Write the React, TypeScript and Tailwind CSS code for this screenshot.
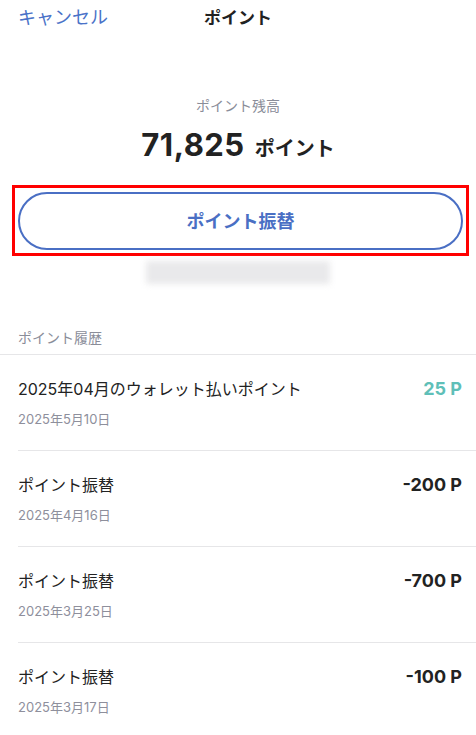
import React from 'react';

interface HistoryItem {
  title: string;
  date: string;
  amount: string;
  positive?: boolean;
}

const history: HistoryItem[] = [
  { title: '2025年04月のウォレット払いポイント', date: '2025年5月10日', amount: '25 P', positive: true },
  { title: 'ポイント振替', date: '2025年4月16日', amount: '-200 P' },
  { title: 'ポイント振替', date: '2025年3月25日', amount: '-700 P' },
  { title: 'ポイント振替', date: '2025年3月17日', amount: '-100 P' },
];

const font = { fontFamily: 'Inter, "Noto Sans CJK JP", sans-serif' };

export default function App() {
  return (
    <div className="w-[476px] h-[735px] bg-white overflow-hidden text-[#222]" style={font}>
      {/* header */}
      <div className="grid grid-cols-[1fr_auto_1fr] items-center h-[36px] px-[18px]">
        <span className="text-[18px] text-[#4a72c8] leading-none">キャンセル</span>
        <span className="text-[17px] font-bold leading-none">ポイント</span>
        <span />
      </div>

      {/* balance */}
      <div className="flex flex-col items-center pt-[60px]">
        <span className="text-[14px] leading-[20px] text-[#8a8d99]">ポイント残高</span>
        <div className="flex items-baseline gap-[10px] mt-[13px] leading-none">
          <span className="text-[31px] font-bold tracking-[0.5px]">71,825</span>
          <span className="text-[20px] font-bold">ポイント</span>
        </div>
      </div>

      {/* transfer button */}
      <div className="ml-[12px] mr-[7px] mt-[25px] border-[3px] border-[#ff0000] pt-[4px] pb-[3px] px-[3px]">
        <button className="w-full h-[58px] rounded-full border-2 border-[#4a6fc4] flex items-center justify-center text-[18px] font-bold text-[#4a6fc4]">
          ポイント振替
        </button>
      </div>

      <div className="flex justify-center mt-[5px]">
        <div className="w-[184px] h-[23px] bg-[#e9e9eb] blur-[3px]" />
      </div>

      {/* history */}
      <div className="mt-[41px] px-[18px] pb-[5px]">
        <span className="text-[14px] leading-[20px] text-[#8a8d99]">ポイント履歴</span>
      </div>
      <div className="border-t border-[#e6e6e8]">
        {history.map((item, i) => (
          <div key={i} className="ml-[18px] border-b border-[#e6e6e8]">
            <div className="flex justify-between pt-[22px] pb-[22px] pr-[14px]">
              <div className="flex flex-col">
                <span className="text-[16px] leading-[24px]">{item.title}</span>
                <span className="text-[13px] leading-[18px] mt-[9px] text-[#8e8f9c]">{item.date}</span>
              </div>
              <span
                className={`text-[18px] font-bold leading-[24px] ${
                  item.positive ? 'text-[#5fbfb8]' : 'text-[#222]'
                }`}
              >
                {item.amount}
              </span>
            </div>
          </div>
        ))}
      </div>
    </div>
  );
}
